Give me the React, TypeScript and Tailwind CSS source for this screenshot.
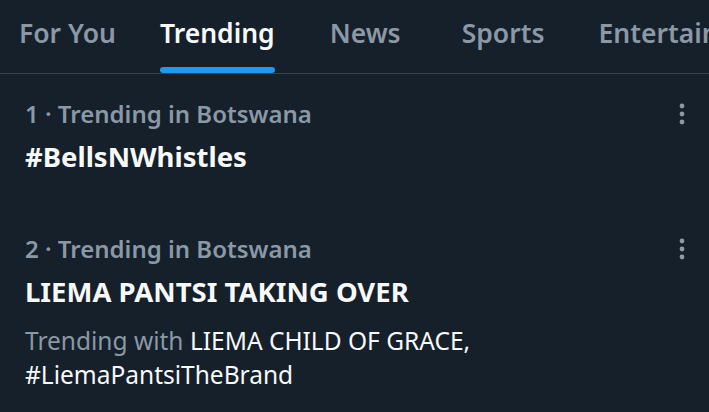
import React from "react";

const Dots = () => (
  <svg width="24" height="24" viewBox="0 0 24 24" className="shrink-0">
    <circle cx="12" cy="4" r="2.4" fill="#8b98a5" />
    <circle cx="12" cy="12" r="2.4" fill="#8b98a5" />
    <circle cx="12" cy="20" r="2.4" fill="#8b98a5" />
  </svg>
);

export default function App() {
  return (
    <div
      className="w-[709px] h-[412px] overflow-hidden bg-[#15202b] text-[#f7f9f9]"
      style={{ fontFamily: '"Noto Sans", "Open Sans", sans-serif' }}
    >
      <div className="flex h-[74px] border-b border-[#38444d] whitespace-nowrap text-[26.5px] font-semibold">
        <div className="ml-[19px] flex h-full items-center pb-[6px] text-[#8b98a5]">For You</div>
        <div className="ml-[44px] relative flex h-full items-center pb-[6px] text-[#f7f9f9]">
          Trending
          <div className="absolute left-0 right-0 bottom-0 h-[6px] rounded-full bg-[#1d9bf0]" />
        </div>
        <div className="ml-[55px] flex h-full items-center pb-[6px] text-[#8b98a5]">News</div>
        <div className="ml-[61px] flex h-full items-center pb-[6px] text-[#8b98a5]">Sports</div>
        <div className="ml-[54px] flex h-full items-center pb-[6px] text-[#8b98a5]">Entertainment</div>
      </div>

      <div className="pl-[25px] pr-[15px] pt-[24px] pb-[35px]">
        <div className="flex items-center justify-between h-[32px]">
          <span className="text-[24px] font-semibold text-[#8b98a5]">1 · Trending in Botswana</span>
          <Dots />
        </div>
        <div className="mt-[10px] h-[34px] leading-[34px] text-[27.5px] font-bold">#BellsNWhistles</div>
      </div>

      <div className="pl-[25px] pr-[15px] pt-[24px]">
        <div className="flex items-center justify-between h-[32px]">
          <span className="text-[24px] font-semibold text-[#8b98a5]">2 · Trending in Botswana</span>
          <Dots />
        </div>
        <div className="mt-[10px] h-[34px] leading-[34px] text-[27.5px] font-bold">LIEMA PANTSI TAKING OVER</div>
        <div className="mt-[15px] text-[24.5px] leading-[34px]">
          <span className="text-[#8b98a5]">Trending with </span>
          <span>LIEMA CHILD OF GRACE,</span>
          <br />
          <span>#LiemaPantsiTheBrand</span>
        </div>
      </div>
    </div>
  );
}
